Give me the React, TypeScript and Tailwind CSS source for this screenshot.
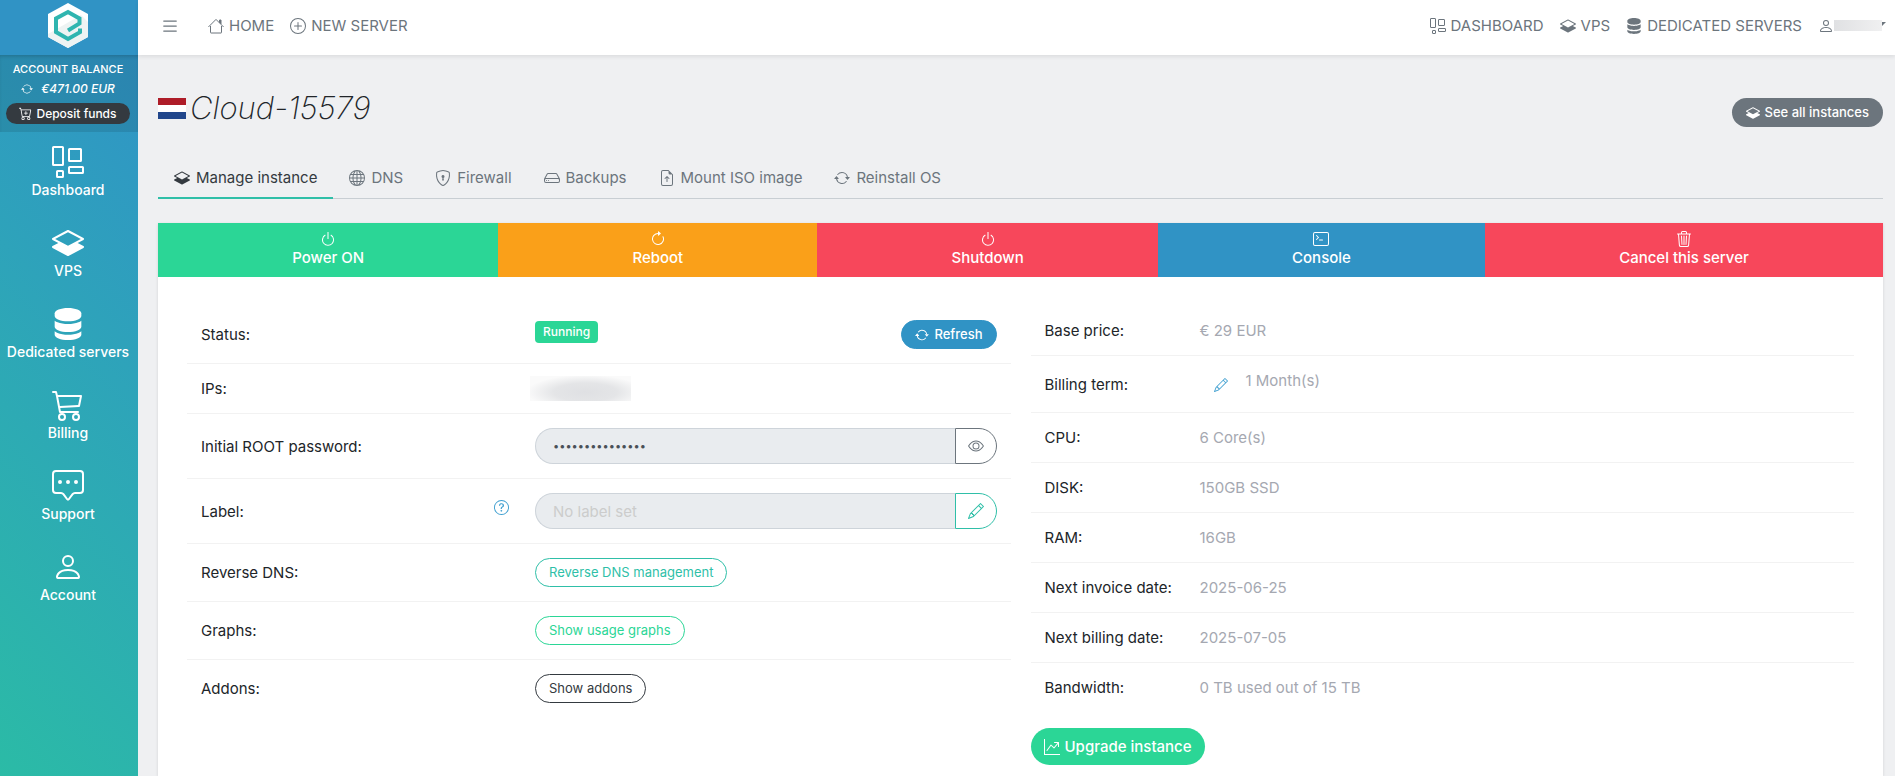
import React from "react";
import clsx from "clsx";
import {
  BsArrowClockwise,
  BsArrowRepeat,
  BsCart3,
  BsCartPlus,
  BsChatSquareDots,
  BsEye,
  BsFileEarmarkArrowUp,
  BsGlobe,
  BsGraphUpArrow,
  BsHdd,
  BsLayersHalf,
  BsList,
  BsPencil,
  BsPerson,
  BsPlusCircle,
  BsPower,
  BsQuestionCircle,
  BsServer,
  BsShieldLock,
  BsTerminal,
  BsTrash3,
} from "react-icons/bs";

type IconType = React.ComponentType<{ className?: string }>;

interface NavItem {
  label: string;
  icon: IconType;
}

interface Action {
  label: string;
  icon: IconType;
  color: string;
}

function DashboardIcon({ className }: { className?: string }) {
  return (
    <svg viewBox="0 0 16 16" fill="none" stroke="currentColor" className={className}>
      <rect x="0.5" y="0.5" width="5" height="9" rx="0.3" />
      <rect x="8.5" y="1.5" width="6" height="6" rx="0.3" />
      <rect x="2.5" y="12.5" width="3" height="3" rx="0.3" />
      <rect x="8.5" y="10.5" width="7" height="3" rx="0.3" />
    </svg>
  );
}

function HouseIcon({ className }: { className?: string }) {
  return (
    <svg viewBox="0 0 16 16" fill="none" stroke="currentColor" className={className}>
      <path d="M2.500 8v6.500a.5.5 0 0 0 .5.5h10a.5.5 0 0 0 .5-.5V8" />
      <path d="M.7 8.700 8 1.400l7.300 7.300" strokeLinecap="round" strokeLinejoin="round" />
      <path d="M11.500 2h1.500v3.800l-1.500-1.500z" fill="currentColor" />
    </svg>
  );
}

function Logo() {
  return (
    <svg viewBox="0 0 40 45" className="h-[45px] w-10">
      <path d="M20 0 40 11v23L20 45 0 34V11z" fill="#fff" />
      <path d="M0 31 33 12l7 7v15L20 45 0 34z" fill="#eef3f3" />
      <path
        d="M20 27.500 31.500 20.500V15.500L20 9 8 15.500V29l12 7 12-6.800v-3.700"
        fill="none"
        stroke="#2fb5b0"
        strokeWidth="4"
      />
    </svg>
  );
}

const sideItems: NavItem[] = [
  { label: "Dashboard", icon: DashboardIcon },
  { label: "VPS", icon: BsLayersHalf },
  { label: "Dedicated servers", icon: BsServer },
  { label: "Billing", icon: BsCart3 },
  { label: "Support", icon: BsChatSquareDots },
  { label: "Account", icon: BsPerson },
];

const tabs: NavItem[] = [
  { label: "Manage instance", icon: BsLayersHalf },
  { label: "DNS", icon: BsGlobe },
  { label: "Firewall", icon: BsShieldLock },
  { label: "Backups", icon: BsHdd },
  { label: "Mount ISO image", icon: BsFileEarmarkArrowUp },
  { label: "Reinstall OS", icon: BsArrowRepeat },
];

const actions: Action[] = [
  { label: "Power ON", icon: BsPower, color: "bg-[#2bd696]" },
  { label: "Reboot", icon: BsArrowClockwise, color: "bg-[#faa019]" },
  { label: "Shutdown", icon: BsPower, color: "bg-[#f7475b]" },
  { label: "Console", icon: BsTerminal, color: "bg-[#3093c5]" },
  { label: "Cancel this server", icon: BsTrash3, color: "bg-[#f7475b]" },
];

const specs = [
  ["CPU:", "6 Core(s)"],
  ["DISK:", "150GB SSD"],
  ["RAM:", "16GB"],
  ["Next invoice date:", "2025-06-25"],
  ["Next billing date:", "2025-07-05"],
  ["Bandwidth:", "0 TB used out of 15 TB"],
];

function Sidebar() {
  return (
    <aside className="w-[138px] shrink-0 bg-[linear-gradient(45deg,#2bbba6,#3092c8)] text-white">
      <a href="#" aria-label="Home" className="flex h-[55px] items-start justify-center bg-[#3093c5] pt-[3px] pr-0.5">
        <Logo />
      </a>
      <div className="flex h-[77px] flex-col items-center bg-black/10 pt-1 pr-0.5 text-xs font-medium shadow-[inset_0_3px_4px_-2px_rgba(0,0,0,0.2)]">
        <div className="text-[11px] leading-5">ACCOUNT BALANCE</div>
        <div className="flex items-center gap-2 leading-5 italic">
          <button aria-label="Refresh balance">
            <BsArrowRepeat className="size-3" />
          </button>
          €471.00 EUR
        </div>
        <button className="mt-1 flex h-[21px] w-[124px] items-center justify-center gap-1 rounded-full bg-[#343a40]">
          <BsCartPlus className="size-[13px]" />
          Deposit funds
        </button>
      </div>
      <nav>
        {sideItems.map(({ label, icon: Icon }) => (
          <a key={label} href="#" className="flex h-[81px] flex-col items-center pt-[14px] pr-0.5 text-sm font-medium">
            <Icon className="size-8" />
            <span className="leading-6 whitespace-nowrap">{label}</span>
          </a>
        ))}
      </nav>
    </aside>
  );
}

function TopLink({ label, icon: Icon }: NavItem) {
  return (
    <a href="#" className="flex items-center gap-[5px]">
      <Icon className="size-4" />
      {label}
    </a>
  );
}

function Topbar() {
  return (
    <header className="flex h-[55px] items-start justify-between bg-white pt-[13px] pr-[9px] pl-[22px] text-[15px] leading-[25px] text-[#6c757d] shadow-[0_2px_4px_rgba(0,0,0,0.08)]">
      <div className="flex items-center gap-4">
        <button aria-label="Toggle menu" className="mr-3">
          <BsList className="size-5" />
        </button>
        <TopLink label="HOME" icon={HouseIcon} />
        <TopLink label="NEW SERVER" icon={BsPlusCircle} />
      </div>
      <nav className="flex items-center gap-4">
        <TopLink label="DASHBOARD" icon={DashboardIcon} />
        <TopLink label="VPS" icon={BsLayersHalf} />
        <TopLink label="DEDICATED SERVERS" icon={BsServer} />
        <button aria-label="User menu" className="flex items-center">
          <BsPerson className="size-4" />
          <span className="h-[11px] w-12 bg-linear-to-r from-[#e0e1e3] to-[#f0f0f1]" />
          <svg viewBox="0 0 4 4" className="mb-1 size-1" fill="currentColor">
            <path d="M0 0h4L0 4z" />
          </svg>
        </button>
      </nav>
    </header>
  );
}

interface RowProps {
  label: string;
  htmlFor?: string;
  help?: boolean;
  last?: boolean;
  children: React.ReactNode;
}

function Row({ label, htmlFor, help, last, children }: RowProps) {
  return (
    <tr className={clsx(!last && "border-b border-[#f2f2f2]")}>
      <th scope="row" className="w-[334px] pr-3 pl-[14px] text-left font-normal">
        <div className="flex items-center justify-between">
          {htmlFor ? <label htmlFor={htmlFor}>{label}</label> : label}
          {help && (
            <button aria-label="What is a label?" className="mb-2 text-[#3f9fd0]">
              <BsQuestionCircle className="size-[15px]" />
            </button>
          )}
        </div>
      </th>
      <td className="px-[14px] py-[14px]">{children}</td>
    </tr>
  );
}

const pill = "flex h-[29px] items-center rounded-full border px-[13px] text-[13px]";
const field =
  "min-w-0 flex-1 rounded-l-full border border-r-0 border-[#ced4da] bg-[#e9ecef] px-[17px] text-[#495057] placeholder:text-[#cccccc]";

function InstanceTable() {
  return (
    <table className="w-full">
      <tbody>
        <Row label="Status:">
          <div className="flex items-start justify-between">
            <span className="mt-px rounded bg-[#2bd696] px-2 text-xs leading-[22px] font-medium text-white">Running</span>
            <button className={clsx(pill, "gap-[5px] border-[#3093c5] bg-[#3093c5] font-medium text-white")}>
              <BsArrowRepeat className="size-[14px]" />
              Refresh
            </button>
          </div>
        </Row>
        <Row label="IPs:">
          <div className="-my-1 -ml-[5px] flex h-[29px] items-center">
            <div className="h-[25px] w-[101px] bg-[radial-gradient(ellipse_at_55%_65%,#dfe0e3_0%,#e4e5e7_40%,#fafafa_75%)]" />
          </div>
        </Row>
        <Row label="Initial ROOT password:" htmlFor="password">
          <div className="flex h-9">
            <input
              id="password"
              type="password"
              readOnly
              value="abcdefghijklmno"
              className={clsx(field, "text-[11px]")}
            />
            <button
              aria-label="Show password"
              className="flex w-[42px] items-center justify-center rounded-r-full border border-[#6c757d] text-[#6c757d]"
            >
              <BsEye className="size-4" />
            </button>
          </div>
        </Row>
        <Row label="Label:" htmlFor="label" help>
          <div className="flex h-9">
            <input id="label" type="text" readOnly placeholder="No label set" className={field} />
            <button
              aria-label="Edit label"
              className="flex w-[42px] items-center justify-center rounded-r-full border border-[#2fbfa8] text-[#2fbfa8]"
            >
              <BsPencil className="size-4" />
            </button>
          </div>
        </Row>
        <Row label="Reverse DNS:">
          <button className={clsx(pill, "border-[#2fbfa8] text-[#2fbfa8]")}>Reverse DNS management</button>
        </Row>
        <Row label="Graphs:">
          <button className={clsx(pill, "border-[#2bd696] text-[#2bd696]")}>Show usage graphs</button>
        </Row>
        <Row label="Addons:" last>
          <button className={clsx(pill, "border-[#343a40] text-[#343a40]")}>Show addons</button>
        </Row>
      </tbody>
    </table>
  );
}

function SpecTable() {
  return (
    <table className="w-full">
      <tbody>
        <tr className="border-b border-[#f2f2f2]">
          <th scope="row" className="w-[155px] px-[14px] text-left font-normal whitespace-nowrap">
            Base price:
          </th>
          <td className="px-[14px] py-[14px] text-[#a5a8b1]">€ 29 EUR</td>
        </tr>
        <tr className="border-b border-[#f2f2f2]">
          <th scope="row" className="px-[14px] text-left font-normal whitespace-nowrap">
            Billing term:
          </th>
          <td className="px-[14px] py-[14px] text-[#a5a8b1]">
            <div className="flex h-7 items-start gap-[18px] pl-[14px]">
              <button aria-label="Change billing term" className="mt-2 text-[#3f9fd0]">
                <BsPencil className="size-[14px]" />
              </button>
              1 Month(s)
            </div>
          </td>
        </tr>
        {specs.map(([name, value], i) => (
          <tr key={name} className={clsx(i < specs.length - 1 && "border-b border-[#f2f2f2]")}>
            <th scope="row" className="pl-[14px] text-left font-normal whitespace-nowrap">
              {name}
            </th>
            <td className="px-[14px] py-[14px] text-[#a5a8b1]">{value}</td>
          </tr>
        ))}
      </tbody>
    </table>
  );
}

export default function App() {
  return (
    <div className="flex min-h-screen bg-[#eff0f2] font-['Inter',sans-serif] text-[15px] leading-[21px] text-[#212529]">
      <Sidebar />
      <div className="flex min-w-0 flex-1 flex-col">
        <Topbar />
        <main className="flex flex-1 flex-col pr-3 pl-5">
          <div className="flex items-start justify-between pt-[33px]">
            <h1 className="flex items-center gap-1 text-[31px] leading-10 font-extralight italic">
              <svg viewBox="0 0 28 21" className="h-[21px] w-7">
                <path d="M0 0h28v7H0z" fill="#ae1c28" />
                <path d="M0 7h28v7H0z" fill="#fff" />
                <path d="M0 14h28v7H0z" fill="#21468b" />
              </svg>
              Cloud-15579
            </h1>
            <button className="mt-[10px] flex h-[29px] items-center gap-[5px] rounded-full bg-[#6c757d] px-[14px] text-[13px] font-medium text-white">
              <BsLayersHalf className="size-[14px]" />
              See all instances
            </button>
          </div>

          {/* tabs */}
          <nav className="mt-7 flex border-b border-[#c8ced3]">
            {tabs.map(({ label, icon: Icon }, i) => (
              <a
                key={label}
                href="#"
                className={clsx(
                  "-mb-px flex h-[43px] items-center gap-[6px] border-b-2 px-4 pt-0.5",
                  i === 0 ? "border-[#2fbfa8] text-[#343a40]" : "border-transparent text-[#6c757d]"
                )}
              >
                <Icon className="size-4" />
                {label}
              </a>
            ))}
          </nav>

          <section className="mt-6 flex-1 bg-white shadow-[0_1px_3px_rgba(0,0,0,0.12)]">
            <div className="flex">
              {actions.map(({ label, icon: Icon, color }) => (
                <button
                  key={label}
                  className={clsx("flex h-[54px] flex-auto flex-col items-center pt-2 font-medium text-white", color)}
                >
                  <Icon className="size-4" />
                  <span className="leading-[22px]">{label}</span>
                </button>
              ))}
            </div>
            <div className="grid grid-cols-2 items-start gap-5 px-[29px] pt-[29px] pb-2">
              <InstanceTable />
              <div>
                <SpecTable />
                <button className="mt-4 flex h-[37px] items-center gap-[5px] rounded-full bg-[#2bd696] px-[13px] font-medium text-white">
                  <BsGraphUpArrow className="size-4" />
                  Upgrade instance
                </button>
              </div>
            </div>
          </section>
        </main>
      </div>
    </div>
  );
}
